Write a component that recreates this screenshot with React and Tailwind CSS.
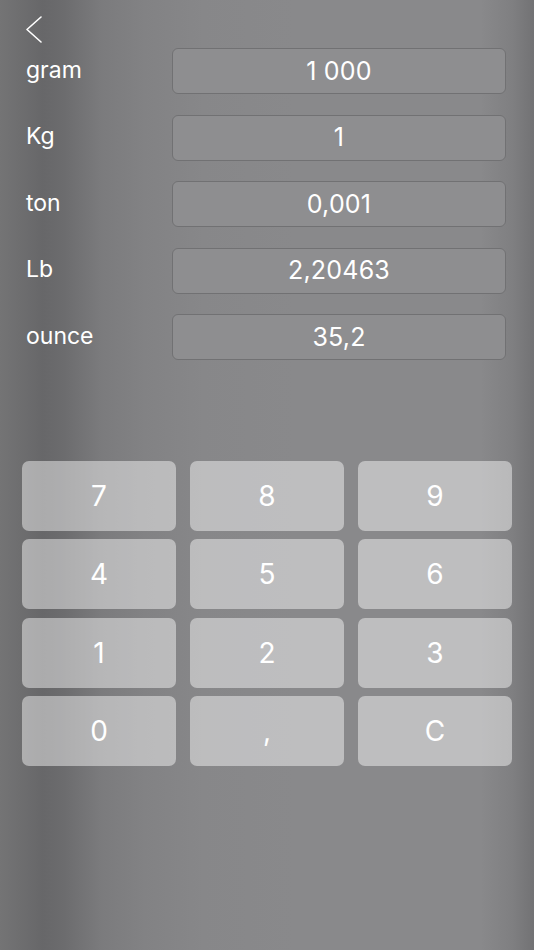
const UNITS = [
  { name: 'gram', value: '1 000' },
  { name: 'Kg', value: '1' },
  { name: 'ton', value: '0,001' },
  { name: 'Lb', value: '2,20463' },
  { name: 'ounce', value: '35,2' },
]

const KEYS = ['7', '8', '9', '4', '5', '6', '1', '2', '3', '0', ',', 'C']

export default function App() {
  return (
    <div className="min-h-[950px] w-full font-['Inter','Liberation_Sans',sans-serif] text-white bg-[linear-gradient(90deg,#747475_0%,#676769_8%,#6c6c6e_12%,#7b7b7d_19%,#828284_27%,#878789_38%,#89898b_55%,#89898b_90%,#7f7f81_96%,#727274_100%)]">
      <div className="h-[48px] pl-[25px] pt-[16px]">
        <svg width="18" height="28" viewBox="0 0 18 28" fill="none">
          <path d="M16 1 L2 13.5 L16 26" stroke="white" strokeWidth="1.6" strokeLinecap="round" strokeLinejoin="round" />
        </svg>
      </div>

      <div className="flex flex-col gap-[20.5px] pl-[26px] pr-[28px]">
        {UNITS.map((unit) => (
          <div key={unit.name} className="flex items-center h-[46px]">
            <span className="w-[146px] text-[23px] leading-none pb-[2px]">{unit.name}</span>
            <div className="flex-1 h-full flex items-center justify-center rounded-[6px] border border-[#717173] bg-[#8e8e90] text-[25px] leading-none">
              <span className="tracking-[0.2px]">{unit.value}</span>
            </div>
          </div>
        ))}
      </div>

      <div className="grid grid-cols-3 gap-x-[14px] gap-y-[8.3px] px-[22px] mt-[101px]">
        {KEYS.map((key) => (
          <button key={key} className="h-[70px] rounded-[7px] bg-white/45 text-[28px] leading-none text-white flex items-center justify-center">
            {key}
          </button>
        ))}
      </div>
    </div>
  )
}
